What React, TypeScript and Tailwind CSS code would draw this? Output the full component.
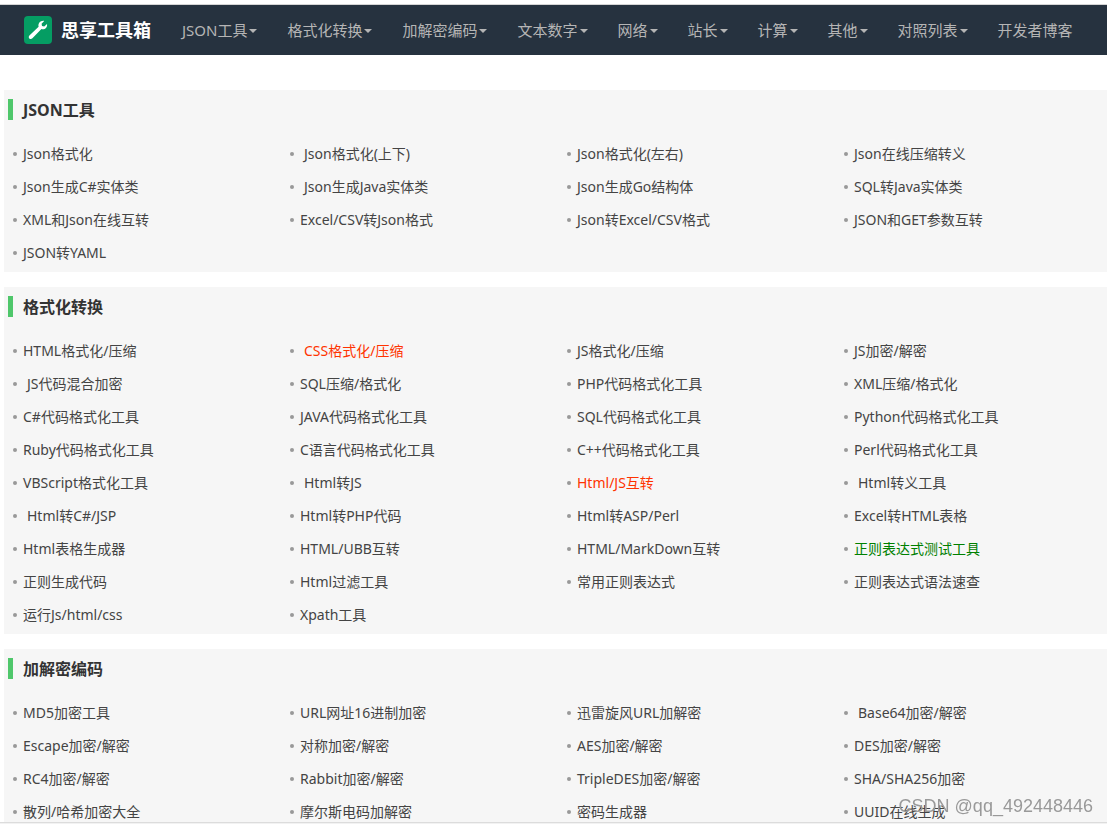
import { clsx } from 'clsx';

interface NavItem {
  label: string;
  menu?: boolean;
}

interface ToolLink {
  label: string;
  // some entries sit one space further in
  indent?: boolean;
  tone?: 'red' | 'green';
}

interface ToolSection {
  title: string;
  links: ToolLink[];
}

const NAV_ITEMS: NavItem[] = [
  { label: 'JSON工具', menu: true },
  { label: '格式化转换', menu: true },
  { label: '加解密编码', menu: true },
  { label: '文本数字', menu: true },
  { label: '网络', menu: true },
  { label: '站长', menu: true },
  { label: '计算', menu: true },
  { label: '其他', menu: true },
  { label: '对照列表', menu: true },
  { label: '开发者博客' },
];

const SECTIONS: ToolSection[] = [
  {
    title: 'JSON工具',
    links: [
      { label: 'Json格式化' },
      { label: 'Json格式化(上下)', indent: true },
      { label: 'Json格式化(左右)' },
      { label: 'Json在线压缩转义' },
      { label: 'Json生成C#实体类' },
      { label: 'Json生成Java实体类', indent: true },
      { label: 'Json生成Go结构体' },
      { label: 'SQL转Java实体类' },
      { label: 'XML和Json在线互转' },
      { label: 'Excel/CSV转Json格式' },
      { label: 'Json转Excel/CSV格式' },
      { label: 'JSON和GET参数互转' },
      { label: 'JSON转YAML' },
    ],
  },
  {
    title: '格式化转换',
    links: [
      { label: 'HTML格式化/压缩' },
      { label: 'CSS格式化/压缩', indent: true, tone: 'red' },
      { label: 'JS格式化/压缩' },
      { label: 'JS加密/解密' },
      { label: 'JS代码混合加密', indent: true },
      { label: 'SQL压缩/格式化' },
      { label: 'PHP代码格式化工具' },
      { label: 'XML压缩/格式化' },
      { label: 'C#代码格式化工具' },
      { label: 'JAVA代码格式化工具' },
      { label: 'SQL代码格式化工具' },
      { label: 'Python代码格式化工具' },
      { label: 'Ruby代码格式化工具' },
      { label: 'C语言代码格式化工具' },
      { label: 'C++代码格式化工具' },
      { label: 'Perl代码格式化工具' },
      { label: 'VBScript格式化工具' },
      { label: 'Html转JS', indent: true },
      { label: 'Html/JS互转', tone: 'red' },
      { label: 'Html转义工具', indent: true },
      { label: 'Html转C#/JSP', indent: true },
      { label: 'Html转PHP代码' },
      { label: 'Html转ASP/Perl' },
      { label: 'Excel转HTML表格' },
      { label: 'Html表格生成器' },
      { label: 'HTML/UBB互转' },
      { label: 'HTML/MarkDown互转' },
      { label: '正则表达式测试工具', tone: 'green' },
      { label: '正则生成代码' },
      { label: 'Html过滤工具' },
      { label: '常用正则表达式' },
      { label: '正则表达式语法速查' },
      { label: '运行Js/html/css' },
      { label: 'Xpath工具' },
    ],
  },
  {
    title: '加解密编码',
    links: [
      { label: 'MD5加密工具' },
      { label: 'URL网址16进制加密' },
      { label: '迅雷旋风URL加解密' },
      { label: 'Base64加密/解密', indent: true },
      { label: 'Escape加密/解密' },
      { label: '对称加密/解密' },
      { label: 'AES加密/解密' },
      { label: 'DES加密/解密' },
      { label: 'RC4加密/解密' },
      { label: 'Rabbit加密/解密' },
      { label: 'TripleDES加密/解密' },
      { label: 'SHA/SHA256加密' },
      { label: '散列/哈希加密大全' },
      { label: '摩尔斯电码加解密' },
      { label: '密码生成器' },
      { label: 'UUID在线生成' },
    ],
  },
];

function Logo() {
  return (
    <svg className="w-7 h-7 shrink-0" viewBox="0 0 28 28" aria-hidden="true">
      <rect width="28" height="28" rx="4" fill="#059d63" />
      <path
        d="M20.2 4.9 L17.6 7.8 L18 10 L20.2 10.4 L23 7.9 C23.7 11.4 20.8 14 17.4 13.1 L8.4 22.3 C7.5 23.1 6.2 23.2 5.3 22.4 C4.5 21.6 4.6 20.3 5.4 19.5 L14.6 10.7 C13.7 7.3 16.6 4.2 20.2 4.9 Z"
        fill="#fff"
      />
    </svg>
  );
}

function Navbar() {
  return (
    <header className="flex h-[51px] items-center border-t border-[#d5d5d5] bg-[#26323f] pl-6">
      <a href="#" className="flex items-center gap-[9px] text-lg font-bold whitespace-nowrap text-white">
        <Logo />
        思享工具箱
      </a>
      <nav className="ml-4 flex pt-px text-[15px] text-[#b5b5b5]">
        {NAV_ITEMS.map((item) =>
          item.menu ? (
            <button key={item.label} className="flex items-center gap-[2px] px-[15px] whitespace-nowrap">
              {item.label}
              <svg className="mt-[2px] w-2 h-1" viewBox="0 0 8 4" aria-hidden="true">
                <path d="M0 0h8L4 4z" fill="currentColor" />
              </svg>
            </button>
          ) : (
            <a key={item.label} href="#" className="px-[15px] whitespace-nowrap">
              {item.label}
            </a>
          ),
        )}
      </nav>
    </header>
  );
}

function Section({ section }: { section: ToolSection }) {
  return (
    <section className="bg-[#f6f6f6] pb-[3px]">
      <div className="flex h-[47px] items-start pt-[9px] pl-1">
        <h2 className="border-l-[5px] border-[#4fc76b] pt-px pl-[10px] text-base leading-5 font-bold text-[#333]">
          {section.title}
        </h2>
      </div>
      <ul className="-mr-[5px] grid grid-cols-4">
        {section.links.map((link) => (
          <li key={link.label} className="flex h-[33px] items-center gap-[6px] pl-[9px]">
            <span className="w-1 h-1 shrink-0 rounded-full bg-[#999]" />
            <a
              href="#"
              className={clsx(
                'whitespace-nowrap',
                link.indent && 'pl-1',
                link.tone === 'red' && 'text-[#ff3300]',
                link.tone === 'green' && 'text-[#008000]',
              )}
            >
              {link.label}
            </a>
          </li>
        ))}
      </ul>
    </section>
  );
}

export default function App() {
  return (
    <div className="min-h-screen overflow-hidden bg-white pt-1 font-['Noto_Sans','Noto_Sans_CJK_SC',sans-serif] text-sm text-[#444]">
      <Navbar />
      <main className="mt-[35px] flex flex-col gap-[15px] pl-1">
        {SECTIONS.map((section) => (
          <Section key={section.title} section={section} />
        ))}
      </main>

      {/* Bottom edge and watermark */}
      <div className="fixed inset-x-0 bottom-0 h-[2px] border-t border-[#dcdcdc] bg-[#f2f2f2]" />
      <span className="fixed right-[14px] bottom-[6px] font-['Liberation_Sans',sans-serif] text-lg leading-6 text-[#999]">
        CSDN @qq_492448446
      </span>
    </div>
  );
}
